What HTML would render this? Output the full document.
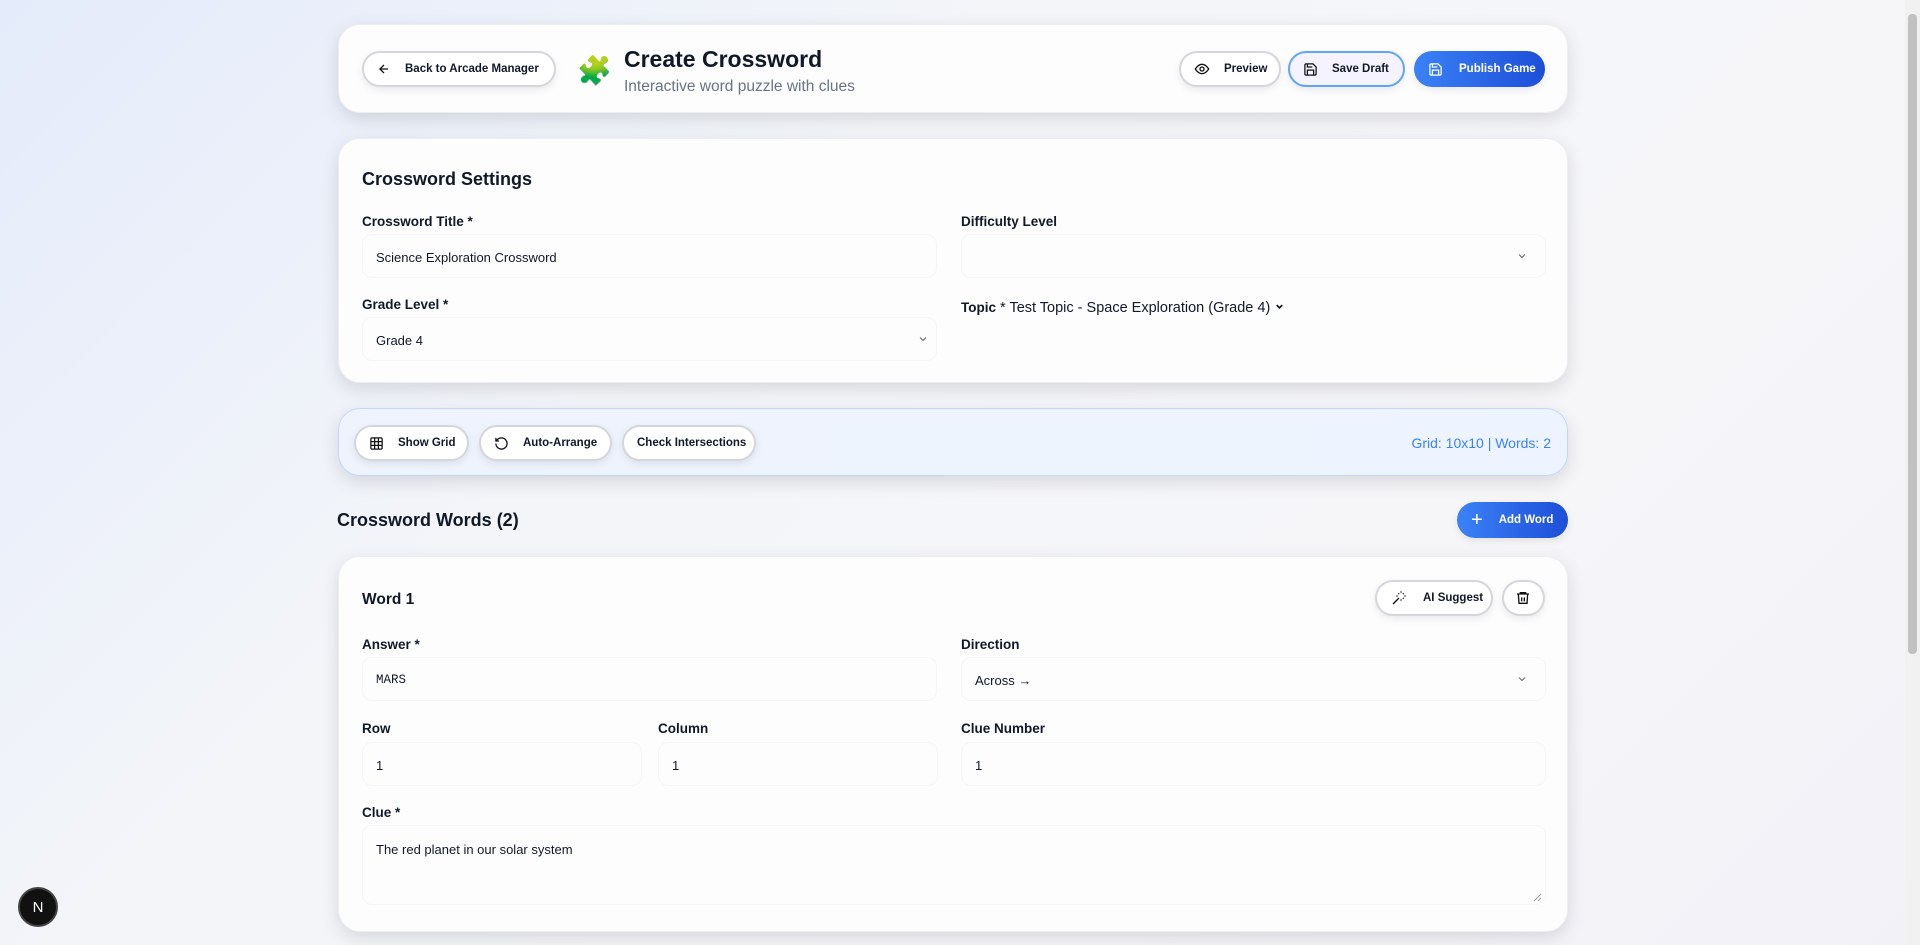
<!DOCTYPE html><html><head><style>
*{box-sizing:border-box;margin:0;padding:0}
body{width:1920px;height:945px;overflow:hidden;font-family:"Liberation Sans",sans-serif;color:#111827;background:linear-gradient(135deg,#e4ebfa 0%,#f3f5f9 35%,#f6f6f9 70%,#f2f1f8 100%);position:relative}
.card{position:absolute;left:338px;width:1230px;background:#fdfdfe;border-radius:22px;box-shadow:0 6px 18px rgba(0,0,0,.12);border:1px solid #eceef2}
.btn{position:absolute;height:36px;border-radius:18px;background:#fff;border:2px solid #d4d6db;font-size:11.5px;font-weight:bold;display:flex;align-items:center;gap:14px;padding:0 13px;box-shadow:0 3px 8px rgba(0,0,0,.08);white-space:nowrap}
.blue{background:linear-gradient(90deg,#3b82f6,#1d4ed8);color:#fff;border:none}
.lbl{position:absolute;font-size:13.5px;font-weight:bold}
.val{position:absolute;font-size:13px}
.inp{position:absolute;height:44px;border:1px solid #f6f6f8;border-radius:10px}
.chev{position:absolute}
svg{flex:none}
</style></head><body>
<div class="card" style="top:24px;height:89px">
 <div class="btn" style="left:23px;top:26px;width:194px"><svg width="14" height="14" viewBox="0 0 24 24" fill="none" stroke="#111" stroke-width="2.2"><path d="M19 12H5M12 19l-7-7 7-7"/></svg>Back to Arcade Manager</div>
 <div style="position:absolute;left:238px;top:29px;font-size:28px;color:#8fd46a">🧩</div>
 <div style="position:absolute;left:285px;top:21px;font-size:23px;font-weight:bold">Create Crossword</div>
 <div style="position:absolute;left:285px;top:53px;font-size:15.5px;color:#6b7280">Interactive word puzzle with clues</div>
 <div class="btn" style="left:840px;top:26px;width:102px"><svg width="16" height="16" viewBox="0 0 24 24" fill="none" stroke="#111" stroke-width="2"><path d="M2 12s4-7 10-7 10 7 10 7-4 7-10 7S2 12 2 12z"/><circle cx="12" cy="12" r="3"/></svg>Preview</div>
 <div class="btn" style="left:949px;top:26px;width:117px;border-color:#60a5fa;background:#f5f3ff"><svg width="15" height="15" viewBox="0 0 24 24" fill="none" stroke="#111" stroke-width="2"><path d="M19 21H5a2 2 0 01-2-2V5a2 2 0 012-2h11l5 5v11a2 2 0 01-2 2z"/><path d="M17 21v-8H7v8M7 3v5h8"/></svg>Save Draft</div>
 <div class="btn blue" style="left:1075px;top:26px;width:131px;padding-left:14px;gap:16px"><svg width="15" height="15" viewBox="0 0 24 24" fill="none" stroke="#fff" stroke-width="2"><path d="M19 21H5a2 2 0 01-2-2V5a2 2 0 012-2h11l5 5v11a2 2 0 01-2 2z"/><path d="M17 21v-8H7v8M7 3v5h8"/></svg>Publish Game</div>
</div>
<div class="card" style="top:138px;height:245px">
 <div style="position:absolute;left:23px;top:30px;font-size:18px;font-weight:bold">Crossword Settings</div>
 <div class="lbl" style="left:23px;top:75px">Crossword Title *</div>
 <div class="inp" style="left:23px;top:95px;width:575px"></div>
 <div class="val" style="left:37px;top:111px">Science Exploration Crossword</div>
 <div class="lbl" style="left:622px;top:75px">Difficulty Level</div>
 <div class="inp" style="left:622px;top:95px;width:585px"></div>
 <svg class="chev" style="left:1177px;top:111px" width="12" height="12" viewBox="0 0 24 24" fill="none" stroke="#666" stroke-width="2"><path d="M6 9l6 6 6-6"/></svg>
 <div class="lbl" style="left:23px;top:158px">Grade Level *</div>
 <div class="inp" style="left:23px;top:178px;width:575px"></div>
 <div class="val" style="left:37px;top:194px">Grade 4</div>
 <svg class="chev" style="left:578px;top:194px" width="12" height="12" viewBox="0 0 24 24" fill="none" stroke="#666" stroke-width="2"><path d="M6 9l6 6 6-6"/></svg>
 <div style="position:absolute;left:622px;top:161px;font-size:14.5px"><b style="font-size:13.5px">Topic</b> * Test Topic - Space Exploration (Grade 4) <svg width="11" height="11" viewBox="0 0 24 24" fill="none" stroke="#111" stroke-width="3.5"><path d="M6 9l6 6 6-6"/></svg></div>
</div>
<div class="card" style="top:408px;height:68px;background:linear-gradient(90deg,#eef3fd,#edf4ff);border:1px solid #bfd7fb">
 <div class="btn" style="left:15px;top:16px;width:115px"><svg width="15" height="15" viewBox="0 0 24 24" fill="none" stroke="#111" stroke-width="2"><rect x="3" y="3" width="18" height="18" rx="2"/><path d="M3 9h18M3 15h18M9 3v18M15 3v18"/></svg>Show Grid</div>
 <div class="btn" style="left:140px;top:16px;width:133px"><svg width="15" height="15" viewBox="0 0 24 24" fill="none" stroke="#111" stroke-width="2"><path d="M3 12a9 9 0 109-9 9.7 9.7 0 00-6.7 2.7L3 8"/><path d="M3 3v5h5"/></svg>Auto-Arrange</div>
 <div class="btn" style="left:283px;top:16px;width:134px">Check Intersections</div>
 <div style="position:absolute;right:16px;top:26px;font-size:14px;color:#3b82f6">Grid: 10x10 | Words: 2</div>
</div>
<div style="position:absolute;left:337px;top:510px;font-size:18px;font-weight:bold">Crossword Words (2)</div>
<div class="btn blue" style="left:1457px;top:502px;width:111px;padding-left:14px;gap:16px"><span style="font-size:20px;font-weight:normal">+</span>Add Word</div>
<div class="card" style="top:556px;height:376px">
 <div style="position:absolute;left:23px;top:34px;font-size:15.5px;font-weight:bold">Word 1</div>
 <div class="btn" style="left:1036px;top:23px;width:118px;padding-left:14px;gap:16px"><svg width="16" height="16" viewBox="0 0 24 24" fill="none" stroke="#111" stroke-width="2"><path d="M15 4V2M15 16v-2M8 9h2M20 9h2M17.8 11.8L19 13M17.8 6.2L19 5M3 21l9-9M12.2 6.2L11 5"/></svg>AI Suggest</div>
 <div class="btn" style="left:1163px;top:23px;width:43px;padding:0 11px"><svg width="16" height="16" viewBox="0 0 24 24" fill="none" stroke="#111" stroke-width="2"><path d="M3 6h18M8 6V4h8v2M19 6l-1 14H6L5 6M10 11v6M14 11v6"/></svg></div>
 <div class="lbl" style="left:23px;top:80px">Answer *</div>
 <div class="inp" style="left:23px;top:100px;width:575px"></div>
 <div class="val" style="left:37px;top:116px;font-family:'Liberation Mono',monospace;font-size:12.5px">MARS</div>
 <div class="lbl" style="left:622px;top:80px">Direction</div>
 <div class="inp" style="left:622px;top:100px;width:585px"></div>
 <div class="val" style="left:636px;top:116px">Across →</div>
 <svg class="chev" style="left:1177px;top:116px" width="12" height="12" viewBox="0 0 24 24" fill="none" stroke="#666" stroke-width="2"><path d="M6 9l6 6 6-6"/></svg>
 <div class="lbl" style="left:23px;top:164px">Row</div>
 <div class="lbl" style="left:319px;top:164px">Column</div>
 <div class="lbl" style="left:622px;top:164px">Clue Number</div>
 <div class="inp" style="left:23px;top:185px;width:280px"></div>
 <div class="inp" style="left:319px;top:185px;width:280px"></div>
 <div class="inp" style="left:622px;top:185px;width:585px"></div>
 <div class="val" style="left:37px;top:201px">1</div>
 <div class="val" style="left:333px;top:201px">1</div>
 <div class="val" style="left:636px;top:201px">1</div>
 <div class="lbl" style="left:23px;top:248px">Clue *</div>
 <div class="inp" style="left:23px;top:268px;width:1184px;height:80px"></div>
 <div class="val" style="left:37px;top:285px">The red planet in our solar system</div>
 <svg class="chev" style="left:1194px;top:336px" width="9" height="9" viewBox="0 0 9 9" stroke="#999" stroke-width="1"><path d="M1 8L8 1M5 8L8 5"/></svg>
</div>
<div style="position:absolute;left:18px;top:887px;width:40px;height:40px;border-radius:50%;background:#111;border:2px solid #444;color:#fff;font-size:15px;display:flex;align-items:center;justify-content:center">N</div>
<div style="position:absolute;left:1905px;top:0;width:15px;height:945px;background:#f1f1f1"></div>
<div style="position:absolute;left:1908px;top:14px;width:9px;height:640px;background:#c1c1c1;border-radius:4px"></div>
</body></html>
